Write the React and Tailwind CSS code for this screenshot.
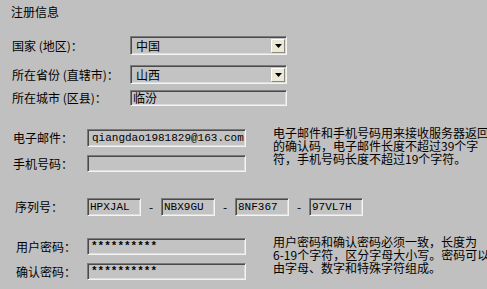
import React from "react";

const sunken =
  "border border-t-[#7a7a7a] border-l-[#7a7a7a] border-r-[#f4f4f4] border-b-[#f4f4f4] shadow-[inset_1px_1px_0_#4a4a4a,inset_-1px_-1px_0_#dcdcdc] bg-[#c3c3c3]";
const cjk = { fontFamily: '"Noto Sans CJK SC", "Noto Sans", sans-serif' };
const mono = { fontFamily: '"Liberation Mono", "Courier New", monospace' };

function Select({ value }) {
  return (
    <div className={`${sunken} flex items-center w-[157px] h-[19px] pl-[5px] pr-[1px]`}>
      <span className="flex-1 text-[12px] leading-none text-black" style={cjk}>{value}</span>
      <div className="w-[14px] h-[14px] bg-[#ece9d8] border border-t-white border-l-white border-r-[#8a8a7a] border-b-[#8a8a7a] flex items-center justify-center">
        <svg width="7" height="4" viewBox="0 0 7 4"><path d="M0 0h7L3.5 4z" fill="#000" /></svg>
      </div>
    </div>
  );
}

function Label({ children, w }) {
  return (
    <div className="text-[12px] leading-none text-black whitespace-nowrap" style={{ ...cjk, width: w }}>
      {children}
    </div>
  );
}

export default function App() {
  return (
    <div className="w-[487px] h-[289px] overflow-hidden bg-[#c0c0c0] relative" style={cjk}>
      <div className="flex flex-col">
        <div className="pl-[11px] pt-[5px] h-[36px] text-[12px] leading-[14px] text-black">注册信息</div>

        <div className="flex items-center h-[19px] pl-[12px]">
          <div className="w-[118px] text-[12px] leading-none text-black whitespace-nowrap">国家 (地区)：</div>
          <Select value="中国" />
        </div>

        <div className="flex items-center h-[19px] mt-[10px] pl-[12px]">
          <div className="w-[118px] text-[12px] leading-none text-black whitespace-nowrap">所在省份 (直辖市)：</div>
          <Select value="山西" />
        </div>

        <div className="flex items-center h-[16px] mt-[6px] pl-[12px]">
          <div className="w-[118px] text-[12px] leading-none text-black whitespace-nowrap">所在城市 (区县)：</div>
          <div className={`${sunken} w-[157px] h-[16px] flex items-center pl-[2px] text-[12px] leading-none text-black`}>临汾</div>
        </div>

        <div className="flex mt-[23px] pl-[13px]">
          <div className="flex flex-col">
            <div className="flex items-center h-[18px]">
              <Label w="74px">电子邮件：</Label>
              <div className={`${sunken} w-[159px] h-[18px] flex items-center pl-[4px] text-[11px] leading-none text-black`} style={mono}>
                qiangdao1981829@163.com
              </div>
            </div>
            <div className="flex items-center h-[17px] mt-[8px]">
              <Label w="74px">手机号码：</Label>
              <div className={`${sunken} w-[159px] h-[17px]`} />
            </div>
          </div>
          <div className="ml-[27px] -mt-[3px] text-[12px] leading-[13px] text-black whitespace-nowrap">
            <div>电子邮件和手机号码用来接收服务器返回</div>
            <div>的确认码，电子邮件长度不超过39个字</div>
            <div>符，手机号码长度不超过19个字符。</div>
          </div>
        </div>

        <div className="flex items-center h-[18px] mt-[26px] pl-[15px]">
          <Label w="72px">序列号：</Label>
          {["HPXJAL", "NBX9GU", "8NF367", "97VL7H"].map((s, i) => (
            <React.Fragment key={s}>
              {i > 0 && <div className="w-[20px] text-center text-[12px] leading-none text-black">-</div>}
              <div className={`${sunken} w-[54px] h-[18px] flex items-center pl-[2px] text-[11px] leading-none text-black`} style={mono}>
                {s}
              </div>
            </React.Fragment>
          ))}
        </div>

        <div className="flex mt-[22px] pl-[16px]">
          <div className="flex flex-col">
            <div className="flex items-center h-[17px]">
              <Label w="71px">用户密码：</Label>
              <div className={`${sunken} w-[159px] h-[17px] flex items-center pl-[3px] text-[11px] leading-none text-black font-bold`} style={mono}>
                **********
              </div>
            </div>
            <div className="flex items-center h-[17px] mt-[8px]">
              <Label w="71px">确认密码：</Label>
              <div className={`${sunken} w-[159px] h-[17px] flex items-center pl-[3px] text-[11px] leading-none text-black font-bold`} style={mono}>
                **********
              </div>
            </div>
          </div>
          <div className="ml-[27px] -mt-[3px] text-[12px] leading-[13px] text-black whitespace-nowrap">
            <div>用户密码和确认密码必须一致，长度为</div>
            <div>6-19个字符，区分字母大小写。密码可以</div>
            <div>由字母、数字和特殊字符组成。</div>
          </div>
        </div>
      </div>
    </div>
  );
}
